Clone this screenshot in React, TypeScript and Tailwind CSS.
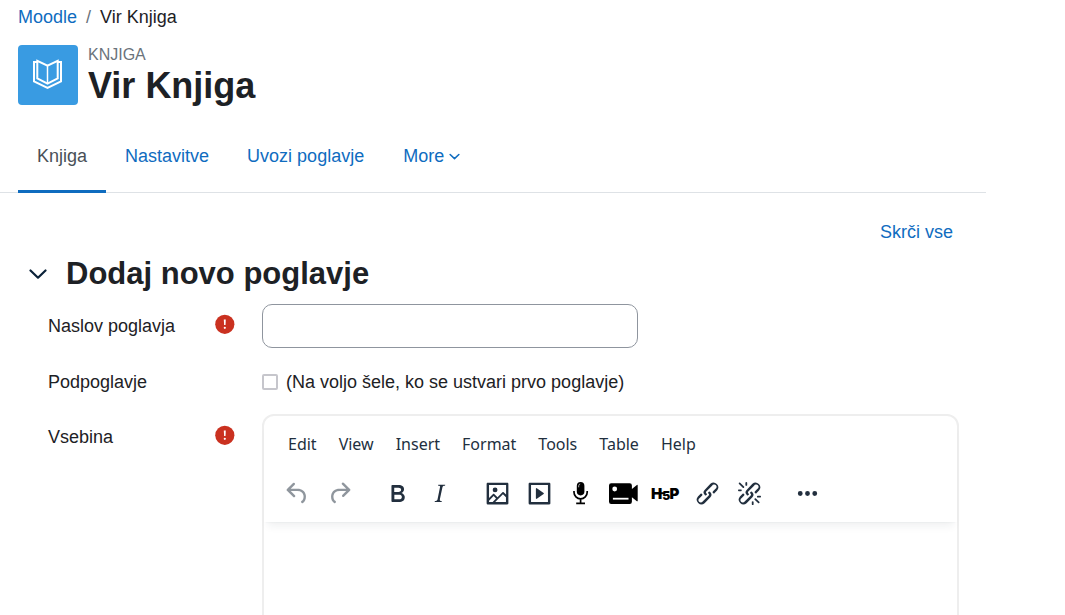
import type { ReactNode } from "react";

const tabs = ["Nastavitve", "Uvozi poglavje"];
const menus = ["Edit", "View", "Insert", "Format", "Tools", "Table", "Help"];

const linkPath =
  "M6.2 12.3a1 1 0 0 1 1.4 1.4l-2 2a2 2 0 1 0 2.6 2.8l4.8-4.8a1 1 0 0 0 0-1.4 1 1 0 1 1 1.4-1.3 2.9 2.9 0 0 1 0 4L9.6 20a3.9 3.9 0 0 1-5.5-5.5l2-2Zm11.6-.6a1 1 0 0 1-1.4-1.4l2-2a2 2 0 1 0-2.6-2.8L11 10.3a1 1 0 0 0 0 1.4A1 1 0 1 1 9.6 13a2.9 2.9 0 0 1 0-4L14.4 4a3.9 3.9 0 0 1 5.5 5.5l-2 2Z";

function Icon({ d }: { d: string }) {
  return (
    <svg viewBox="0 0 24 24" className="size-[29px]" fill="currentColor" fillRule="evenodd" aria-hidden="true">
      <path d={d} />
    </svg>
  );
}

function ToolButton({ label, disabled, children }: { label: string; disabled?: boolean; children: ReactNode }) {
  return (
    <button
      type="button"
      aria-label={label}
      disabled={disabled}
      className="flex h-9 w-[42px] items-center justify-center disabled:opacity-50"
    >
      {children}
    </button>
  );
}

function Chevron({ className }: { className: string }) {
  return (
    <svg viewBox="0 0 18 12" className={className} fill="none" stroke="currentColor" strokeLinecap="round" strokeLinejoin="round" aria-hidden="true">
      <path d="M1.5 2.5 9 9.7 16.5 2.5" />
    </svg>
  );
}

function Required() {
  return (
    <svg viewBox="0 0 20 20" className="size-5 shrink-0" role="img" aria-label="Obvezno">
      <circle cx="9.8" cy="10.3" r="9.6" fill="#ca3120" />
      <path d="M8.8 5.5h2l-.3 5.6H9.1z" fill="#fff" />
      <circle cx="9.8" cy="13.8" r="1.1" fill="#fff" />
    </svg>
  );
}

function BookIcon() {
  return (
    <svg viewBox="0 0 60 60" className="size-[60px]" fill="none" stroke="#fff" strokeWidth="2" aria-hidden="true">
      <path d="M19 17H16V36.3L29.5 42.8 43 36.3V17H40" />
      <path d="M19.3 15.8V33.4L29.5 38.6 39.7 33.4V15.8L29.5 20.6Z" />
      <path d="M29.5 20.6V38.6" strokeWidth="1.5" />
    </svg>
  );
}

export default function App() {
  return (
    <div className="h-screen overflow-hidden bg-white pr-[79px] font-['Liberation_Sans',Arial,sans-serif] text-lg leading-[27px] text-[#1d2125]">
      <header className="px-[18px] pt-1">
        <nav aria-label="Breadcrumb">
          <ol className="flex gap-[9px]">
            <li><a href="#" className="text-[#0f6cbf]">Moodle</a></li>
            <li aria-hidden="true" className="text-[#6a737b]">/</li>
            <li>Vir Knjiga</li>
          </ol>
        </nav>
        <div className="mt-[14px] flex gap-[10px]">
          <div className="size-[60px] rounded bg-[#399be2]"><BookIcon /></div>
          <div>
            <div className="text-base leading-5 text-[#6a737b]">KNJIGA</div>
            <h1 className="text-[36px] leading-[42px] font-bold">Vir Knjiga</h1>
          </div>
        </div>
      </header>

      <nav aria-label="Knjiga" className="mt-[14px] flex h-[72px] border-b border-[#dee2e6] pl-[18px] text-[#0f6cbf]">
        <a href="#" aria-current="page" className="-mb-px flex items-center border-b-[3px] border-[#0f6cbf] px-[19px] pt-[2px] text-[#495057]">Knjiga</a>
        {tabs.map((tab) => (
          <a key={tab} href="#" className="flex items-center px-[19px]">{tab}</a>
        ))}
        <button type="button" className="flex items-center gap-[5px] px-5">
          More
          <Chevron className="h-[7px] w-[11px] stroke-[2.6px]" />
        </button>
      </nav>

      <form className="px-[27px] pt-[26px]" onSubmit={(e) => e.preventDefault()}>
        <div className="pr-[6px] text-right">
          <a href="#" className="text-[#0f6cbf]">Skrči vse</a>
        </div>
        <div className="mt-[9px] flex items-center gap-[19px]">
          <button type="button" aria-label="Dodaj novo poglavje" className="flex w-5 justify-end text-[#0b2239]">
            <Chevron className="h-3 w-[18px] stroke-[2.2px]" />
          </button>
          <h2 className="text-[31px] leading-[38px] font-bold">Dodaj novo poglavje</h2>
        </div>

        <div className="mt-[11px] flex pl-[21px]">
          <div className="flex w-[214px] justify-between pt-[9px] pr-[27px]">
            <label htmlFor="title">Naslov poglavja</label>
            <div className="pt-px"><Required /></div>
          </div>
          <input id="title" type="text" required className="h-11 w-[376px] rounded-[10px] border border-[#8f959e] px-3" />
        </div>

        <div className="mt-[21px] flex pl-[21px] leading-[26px]">
          <div className="w-[214px]">Podpoglavje</div>
          <label className="flex items-center gap-2">
            <input type="checkbox" disabled className="size-4 appearance-none rounded-xs border-2 border-[#c6c6cc] bg-white" />
            (Na voljo šele, ko se ustvari prvo poglavje)
          </label>
        </div>

        <div className="mt-[19px] flex pl-[21px]">
          <div className="flex w-[214px] justify-between pt-[10px] pr-[27px]">
            <span id="content-label">Vsebina</span>
            <div className="pt-px"><Required /></div>
          </div>
          <div className="min-w-0 flex-1 rounded-xl border-2 border-[#eee] text-[#222f3e]">
            <div className="rounded-t-[10px] px-3 pt-2 shadow-[0_2px_2px_-2px_rgba(34,47,62,0.1),0_8px_8px_-4px_rgba(34,47,62,0.07)]">
              <div role="menubar" className="flex gap-[22px] px-3 pt-1 font-['Noto_Sans',sans-serif] text-base leading-8">
                {menus.map((menu) => (
                  <button key={menu} type="button" role="menuitem">{menu}</button>
                ))}
              </div>
              <div role="toolbar" className="flex flex-wrap gap-4 pt-[15px] pb-[11px]">
                <div className="flex">
                  <ToolButton label="Undo" disabled>
                    <Icon d="M6.4 8H12c3.7 0 6.2 2 6.8 5.1.6 2.7-.4 5.6-2.3 6.8a1 1 0 0 1-1-1.8c1.1-.6 1.8-2.7 1.4-4.6-.5-2.1-2.1-3.5-4.9-3.5H6.4l3.3 3.3a1 1 0 1 1-1.4 1.4l-5-5a1 1 0 0 1 0-1.4l5-5a1 1 0 0 1 1.4 1.4L6.4 8Z" />
                  </ToolButton>
                  <ToolButton label="Redo" disabled>
                    <Icon d="M17.6 10H12c-2.8 0-4.4 1.4-4.9 3.5-.4 2 .3 4 1.4 4.6a1 1 0 1 1-1 1.8c-2-1.2-2.9-4.1-2.3-6.8.6-3 3-5.1 6.8-5.1h5.6l-3.3-3.3a1 1 0 1 1 1.4-1.4l5 5a1 1 0 0 1 0 1.4l-5 5a1 1 0 0 1-1.4-1.4l3.3-3.3Z" />
                  </ToolButton>
                </div>
                <div className="flex">
                  <ToolButton label="Bold">
                    <Icon d="M7.8 19c-.3 0-.5 0-.6-.2l-.2-.5V5.7c0-.2 0-.4.2-.5l.6-.2h5c1.5 0 2.7.3 3.5 1 .7.6 1.1 1.4 1.1 2.5a3 3 0 0 1-.6 1.9c-.4.6-1 1-1.6 1.2.4.1.9.3 1.3.6s.8.7 1 1.2c.4.4.5 1 .5 1.6 0 1.3-.4 2.3-1.3 3-.8.7-2.1 1-3.8 1H7.8Zm5-8.3c.6 0 1.2-.1 1.6-.5.4-.3.6-.7.6-1.3 0-1.1-.8-1.7-2.3-1.7H9.3v3.5h3.4Zm.5 6c.7 0 1.3-.1 1.7-.4.4-.4.6-.9.6-1.5s-.2-1-.7-1.4c-.4-.3-1-.4-2-.4H9.4v3.8h4Z" />
                  </ToolButton>
                  <ToolButton label="Italic">
                    <Icon d="m16.7 4.7-.1.9h-.3c-.6 0-1 0-1.4.3-.3.3-.4.6-.5 1.1l-2.1 9.8v.6c0 .5.4.8 1.4.8h.2l-.2.8H8l.2-.8h.2c1.1 0 1.8-.5 2-1.5l2-9.8.1-.5c0-.6-.4-.8-1.4-.8h-.3l.2-.9h5.8Z" />
                  </ToolButton>
                </div>
                <div className="flex">
                  <ToolButton label="Image">
                    <Icon d="m5 15.7 3.3-3.2c.3-.3.7-.3 1 0L12 15l4.1-4c.3-.4.8-.4 1 0l2 1.9V5H5v10.7ZM5 18V19h3l2.8-2.9-2-2L5 17.9Zm14-3-2.5-2.4-6.4 6.5H19v-4ZM4 3h16c.6 0 1 .4 1 1v16c0 .6-.4 1-1 1H4a1 1 0 0 1-1-1V4c0-.6.4-1 1-1Zm6 8a2 2 0 1 0 0-4 2 2 0 0 0 0 4Z" />
                  </ToolButton>
                  <ToolButton label="Multimedia">
                    <Icon d="M4 3h16c.6 0 1 .4 1 1v16c0 .6-.4 1-1 1H4a1 1 0 0 1-1-1V4c0-.6.4-1 1-1Zm1 2v14h14V5H5Zm4.8 2.6 5.6 4a.5.5 0 0 1 0 .8l-5.6 4A.5.5 0 0 1 9 16V8a.5.5 0 0 1 .8-.4Z" />
                  </ToolButton>
                  <ToolButton label="Record audio">
                    <svg viewBox="0 0 29 29" className="size-[29px]" fill="none" stroke="#000" aria-hidden="true">
                      <rect x="9.8" y="3" width="7.6" height="13.4" rx="3.8" fill="#000" stroke="none" />
                      <path d="M7 12v1.2a6.6 6.6 0 0 0 13.2 0V12M13.6 19.8v4.6M9.2 24.4h8.8" strokeWidth="1.7" />
                      <path d="M11.7 8.3V6.8q0-1.6 1.5-1.8" stroke="#aaa" />
                    </svg>
                  </ToolButton>
                  <ToolButton label="Record video">
                    <svg viewBox="0 0 30 29" className="h-[29px] w-[30px]" aria-hidden="true">
                      <path fill="#000" d="M3.2 4.2h18.5q2.2 0 2.2 2.2v3.5l5-3.9q.8-.5.8.5v15.2q0 1-.8.5l-5-3.9v4.4q0 2.2-2.2 2.2H3.2Q1 24.9 1 22.7V6.4q0-2.2 2.2-2.2Z" />
                      <circle cx="6.7" cy="10" r="2.4" fill="#fff" />
                      <rect x="4.9" y="18.8" width="15.6" height="1.8" fill="#fff" />
                    </svg>
                  </ToolButton>
                  <ToolButton label="H5P">
                    <svg viewBox="0 0 30 29" className="h-[29px] w-[30px] font-['Inter',sans-serif] font-black" aria-hidden="true">
                      <text x="1" y="20" fontSize="15" fill="#000">H</text>
                      <text x="12.3" y="20.5" fontSize="12" fill="#000">5</text>
                      <text x="19.5" y="20" fontSize="15" fill="#000">P</text>
                      <path d="M10 13.2h4v2h-4z" fill="#000" />
                    </svg>
                  </ToolButton>
                  <ToolButton label="Link"><Icon d={linkPath} /></ToolButton>
                  <ToolButton label="Unlink">
                    <Icon d={linkPath + "M7.6 6.3a.8.8 0 0 1-1 1.1L3.3 4.2a.7.7 0 1 1 1-1l3.2 3.1ZM5.1 8.6a.8.8 0 0 1 0 1.5H3a.8.8 0 0 1 0-1.5H5Zm5-3.5a.8.8 0 0 1-1.5 0V3a.8.8 0 0 1 1.5 0V5Zm6 11.8a.8.8 0 0 1 1-1l3.2 3.2a.8.8 0 0 1-1 1L16 17Zm-2.2 2a.8.8 0 0 1 1.5 0V21a.8.8 0 0 1-1.5 0V19Zm5-3.5a.7.7 0 1 1 0-1.5H21a.8.8 0 0 1 0 1.5H19Z"} />
                  </ToolButton>
                </div>
                <ToolButton label="More">
                  <Icon d="M6 10a2 2 0 1 0 0 4 2 2 0 0 0 0-4Zm6 0a2 2 0 1 0 0 4 2 2 0 0 0 0-4Zm6 0a2 2 0 1 0 0 4 2 2 0 0 0 0-4Z" />
                </ToolButton>
              </div>
            </div>
            <textarea aria-labelledby="content-label" className="block h-40 w-full resize-none bg-transparent p-4 outline-none" />
          </div>
        </div>
      </form>
    </div>
  );
}
